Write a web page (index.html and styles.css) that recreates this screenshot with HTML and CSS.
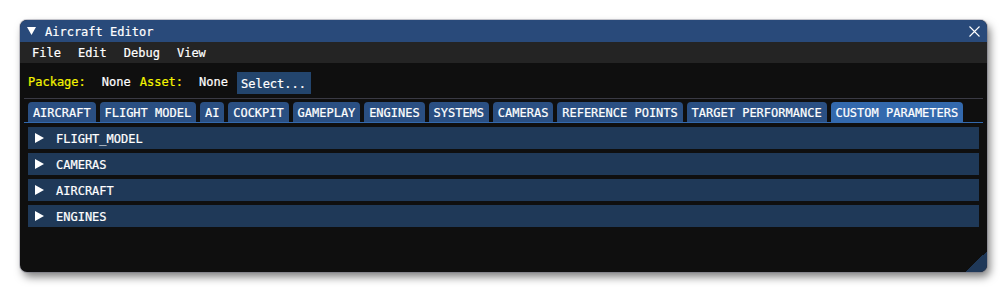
FILE: index.html
```html
<!DOCTYPE html>
<html>
<head>
<meta charset="utf-8">
<title>Aircraft Editor</title>
<link rel="stylesheet" href="styles.css">
</head>
<body>
<div class="window">
  <div class="titlebar">
    <svg class="collapse" width="9" height="8" viewBox="0 0 9 8"><polygon points="0,0 9,0 4.5,8" fill="#fff"/></svg>
    <span class="title">Aircraft Editor</span>
    <svg class="close" width="11" height="11" viewBox="0 0 11 11"><path d="M0.5 0.5 L10.5 10.5 M10.5 0.5 L0.5 10.5" stroke="#fff" stroke-width="1.1" fill="none"/></svg>
  </div>
  <div class="menubar">
    <span class="menu">File</span>
    <span class="menu">Edit</span>
    <span class="menu">Debug</span>
    <span class="menu">View</span>
  </div>
  <div class="content">
    <div class="assetrow">
      <span class="label yellow">Package:</span>
      <span class="label value">None</span>
      <span class="label yellow">Asset:</span>
      <span class="label value">None</span>
      <span class="button">Select...</span>
    </div>
    <div class="separator"></div>
    <div class="tabbar">
      <span class="tab">AIRCRAFT</span>
      <span class="tab">FLIGHT MODEL</span>
      <span class="tab">AI</span>
      <span class="tab">COCKPIT</span>
      <span class="tab">GAMEPLAY</span>
      <span class="tab">ENGINES</span>
      <span class="tab">SYSTEMS</span>
      <span class="tab">CAMERAS</span>
      <span class="tab">REFERENCE POINTS</span>
      <span class="tab">TARGET PERFORMANCE</span>
      <span class="tab active">CUSTOM PARAMETERS</span>
    </div>
    <div class="tabline"></div>
    <div class="headers">
      <div class="header"><svg class="arrow" width="9" height="10" viewBox="0 0 9 10"><polygon points="0,0 9,5 0,10" fill="#fff"/></svg><span>FLIGHT_MODEL</span></div>
      <div class="header"><svg class="arrow" width="9" height="10" viewBox="0 0 9 10"><polygon points="0,0 9,5 0,10" fill="#fff"/></svg><span>CAMERAS</span></div>
      <div class="header"><svg class="arrow" width="9" height="10" viewBox="0 0 9 10"><polygon points="0,0 9,5 0,10" fill="#fff"/></svg><span>AIRCRAFT</span></div>
      <div class="header"><svg class="arrow" width="9" height="10" viewBox="0 0 9 10"><polygon points="0,0 9,5 0,10" fill="#fff"/></svg><span>ENGINES</span></div>
    </div>
  </div>
  <div class="grip"></div>
</div>
</body>
</html>
```

FILE: styles.css
```css
html, body {
  margin: 0;
  padding: 0;
  background: #ffffff;
}

body {
  width: 1007px;
  height: 293px;
  overflow: hidden;
  font-family: "DejaVu Sans Mono", "Liberation Mono", monospace;
  font-size: 12px;
  color: #ffffff;
  -webkit-text-stroke: 0.2px;
}

.window {
  position: relative;
  margin: 20px 0 0 20px;
  width: 967px;
  height: 252px;
  background: #0f0f0f;
  border-radius: 7px;
  overflow: hidden;
  box-shadow: 0 0 0 1px rgba(110, 110, 128, 0.35), 3px 5px 9px rgba(0, 0, 0, 0.5);
  display: flex;
  flex-direction: column;
}

.titlebar {
  height: 22px;
  flex: none;
  background: #294a7a;
  display: flex;
  align-items: center;
  padding: 0 7px;
}

.collapse {
  flex: none;
}

.title {
  margin-left: 9px;
  height: 22px;
  line-height: 24px;
  flex: 1;
}

.close {
  flex: none;
}

.menubar {
  height: 21px;
  flex: none;
  background: #242424;
  display: flex;
  align-items: flex-start;
  padding-left: 12px;
  gap: 17px;
}

.menu {
  height: 21px;
  line-height: 23px;
}

.content {
  padding: 0 8px;
  display: flex;
  flex-direction: column;
}

.assetrow {
  margin-top: 9px;
  height: 22px;
  display: flex;
  align-items: flex-start;
}

.label {
  line-height: 20px;
  white-space: pre;
}

.yellow {
  color: #f4f400;
}

.value {
  margin-left: 16px;
  margin-right: 9px;
}

.button {
  height: 22px;
  line-height: 25px;
  padding: 0 5px 0 4px;
  background: #23456d;
}

.separator {
  margin: 4px -4px 0 -4px;
  height: 1px;
  background: #3a3a44;
}

.tabbar {
  margin-top: 3px;
  display: flex;
  gap: 4px;
}

.tab {
  height: 20px;
  line-height: 23px;
  padding: 0 4.9px;
  background: #2a4f82;
  border-radius: 4px 4px 0 0;
  white-space: pre;
}

.tab.active {
  background: #3369ad;
}

.tabline {
  margin: 0 -4px;
  height: 1px;
  background: #3369ad;
}

.headers {
  margin-top: 4px;
  display: flex;
  flex-direction: column;
  gap: 4px;
}

.header {
  height: 22px;
  background: #1f3958;
  display: flex;
  align-items: center;
  padding-left: 7px;
}

.header .arrow {
  flex: none;
  margin-right: 12px;
}

.header span {
  height: 22px;
  line-height: 25px;
}

.grip {
  position: absolute;
  right: 0;
  bottom: 0;
  width: 21px;
  height: 21px;
  background: linear-gradient(135deg, transparent 50%, #1f3858 50%);
}
```
